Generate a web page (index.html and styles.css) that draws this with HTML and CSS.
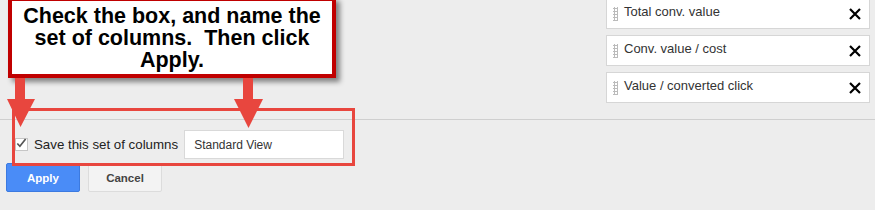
FILE: index.html
```html
<!DOCTYPE html>
<html lang="en">
<head>
  <meta charset="UTF-8" />
  <title>Columns</title>
  <link rel="stylesheet" href="styles.css">
</head>
<body>
  <div class="page">
    <div class="top">
      <ul class="col-list">
        <li class="col-item first">
          <span class="grip"></span>
          <span class="col-name">Total conv. value</span>
          <svg class="remove" width="12" height="12" viewBox="0 0 12 12"><path d="M1 1L11 11M11 1L1 11" stroke="#000" stroke-width="2.2"/></svg>
        </li>
        <li class="col-item">
          <span class="grip"></span>
          <span class="col-name">Conv. value / cost</span>
          <svg class="remove" width="12" height="12" viewBox="0 0 12 12"><path d="M1 1L11 11M11 1L1 11" stroke="#000" stroke-width="2.2"/></svg>
        </li>
        <li class="col-item">
          <span class="grip"></span>
          <span class="col-name">Value / converted click</span>
          <svg class="remove" width="12" height="12" viewBox="0 0 12 12"><path d="M1 1L11 11M11 1L1 11" stroke="#000" stroke-width="2.2"/></svg>
        </li>
      </ul>
    </div>

    <div class="bottom">
      <div class="save-row">
        <label class="save-label">
          <span class="checkbox">
            <svg width="13" height="13" viewBox="0 0 13 13"><path d="M2.5 6.5L5.3 9.5L11.5 1.5" fill="none" stroke="#555" stroke-width="1.8"/></svg>
          </span>
          Save this set of columns
        </label>
        <div class="name-input">Standard View</div>
      </div>
      <div class="actions">
        <button class="btn-apply">Apply</button>
        <button class="btn-cancel">Cancel</button>
      </div>
    </div>

    <!-- annotation overlay -->
    <div class="callout">Check the box, and name the<br>set of columns.&nbsp; Then click<br>Apply.</div>
    <svg class="arrow arrow-1" width="30" height="50" viewBox="0 0 30 50"><path d="M8 0H18V21H28L13.5 49L0 21H8Z" fill="#e8463e"/></svg>
    <svg class="arrow arrow-2" width="30" height="51" viewBox="0 0 30 51"><path d="M9 0H19V21H29L14.5 50L0 21H9Z" fill="#e8463e"/></svg>
    <div class="highlight"></div>
  </div>
</body>
</html>
```

FILE: styles.css
```css
body {
  margin: 0;
  background: #ededed;
  font-family: Arial, "Liberation Sans", sans-serif;
}
.page {
  position: relative;
  width: 875px;
  height: 210px;
  overflow: hidden;
}
.top {
  height: 119px;
  border-bottom: 1px solid #cfcfcf;
  display: flex;
  justify-content: flex-end;
}
.col-list {
  list-style: none;
  margin: -2px 5px 0 0;
  padding: 0;
  width: 264px;
}
.col-item {
  box-sizing: border-box;
  height: 31px;
  margin-bottom: 6px;
  background: #fff;
  border: 1px solid #d6d6d6;
  display: flex;
  align-items: center;
  padding: 0 8px 0 6px;
  font-size: 13px;
  color: #333;
}
.grip {
  width: 5px;
  height: 14px;
  margin-right: 6px;
  background-image: radial-gradient(circle, #bbb 1px, transparent 1.2px);
  background-size: 3px 3px;
}
.col-name {
  flex: 1;
  margin-top: -4px;
}
.remove {
  margin-top: 1px;
}
.bottom {
  padding: 10px 0 0 6px;
}
.save-row {
  display: flex;
  align-items: center;
  height: 29px;
}
.save-label {
  display: flex;
  align-items: center;
  font-size: 13.3px;
  color: #222;
  margin-left: 9px;
}
.checkbox {
  box-sizing: border-box;
  width: 13px;
  height: 13px;
  border: 1px solid #c6c6c6;
  background: #fff;
  margin-right: 6px;
  display: flex;
}
.checkbox svg {
  margin: -2px 0 0 -1px;
}
.name-input {
  box-sizing: border-box;
  width: 160px;
  height: 29px;
  margin-left: 6px;
  background: #fff;
  border: 1px solid #d9d9d9;
  font-size: 12px;
  color: #333;
  padding: 7px 9px;
}
.actions {
  display: flex;
  gap: 8px;
  margin-top: 4px;
}
.actions button {
  box-sizing: border-box;
  width: 74px;
  height: 29px;
  border-radius: 2px;
  font-family: Arial, "Liberation Sans", sans-serif;
  font-weight: bold;
  font-size: 11.5px;
}
.btn-apply {
  background: #4a8cf7;
  border: 1px solid #3c7ae0;
  color: #fff;
}
.btn-cancel {
  background: #f3f3f3;
  border: 1px solid #dcdcdc;
  color: #444;
}
.callout {
  position: absolute;
  left: 8px;
  top: -3px;
  width: 320px;
  padding: 4px 0 3px;
  border: 4px solid #c00000;
  background: #fff;
  box-shadow: 4px 4px 5px rgba(0, 0, 0, 0.45);
  font-size: 21.5px;
  font-weight: bold;
  line-height: 22px;
  text-align: center;
  color: #000;
}
.arrow {
  position: absolute;
}
.arrow-1 {
  left: 7px;
  top: 78px;
}
.arrow-2 {
  left: 234px;
  top: 78px;
}
.highlight {
  position: absolute;
  left: 12px;
  top: 108px;
  width: 337px;
  height: 52px;
  border: 3px solid #e8463e;
}
```
